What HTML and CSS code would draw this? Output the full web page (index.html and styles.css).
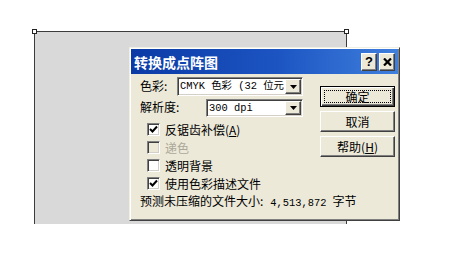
FILE: index.html
```html
<!DOCTYPE html>
<html lang="zh-CN">
<head>
    <meta charset="UTF-8">
    <meta name="viewport" content="width=device-width, initial-scale=1.0">
    <title>转换成点阵图</title>
    <link rel="stylesheet" href="styles.css">
</head>
<body>
    <!-- 背景中的灰色对象 -->
    <div class="sheet">
        <span class="handle left"></span>
        <span class="handle right"></span>
    </div>

    <div class="dialog">
        <div class="title-bar">
            <span class="title">转换成点阵图</span>
            <div class="title-buttons">
                <button class="cap-btn help">?</button>
                <button class="cap-btn">
                    <svg width="9" height="8" viewBox="0 0 9 8"><path d="M1 0.5 L8 7.5 M8 0.5 L1 7.5" stroke="#000" stroke-width="2.2"/></svg>
                </button>
            </div>
        </div>

        <div class="dialog-body">
            <div class="options">
                <div class="field">
                    <span class="label">色彩:</span>
                    <div class="combo wide">
                        <span class="combo-text">CMYK 色彩 (32 位元</span>
                        <span class="combo-arrow"><svg width="7" height="4" viewBox="0 0 7 4"><path d="M0 0 H7 L3.5 4 Z" fill="#000"/></svg></span>
                    </div>
                </div>
                <div class="field second">
                    <span class="label">解析度:</span>
                    <div class="combo narrow">
                        <span class="combo-text">300 dpi</span>
                        <span class="combo-arrow"><svg width="7" height="4" viewBox="0 0 7 4"><path d="M0 0 H7 L3.5 4 Z" fill="#000"/></svg></span>
                    </div>
                </div>

                <div class="check-list">
                    <div class="check-row">
                        <span class="box"><svg width="9" height="9" viewBox="0 0 9 9"><path d="M1 4 L3.5 6.5 L8 1.5" fill="none" stroke="#000" stroke-width="2"/></svg></span>
                        <span>反锯齿补偿(<u>A</u>)</span>
                    </div>
                    <div class="check-row disabled">
                        <span class="box"></span>
                        <span>递色</span>
                    </div>
                    <div class="check-row">
                        <span class="box"></span>
                        <span>透明背景</span>
                    </div>
                    <div class="check-row">
                        <span class="box"><svg width="9" height="9" viewBox="0 0 9 9"><path d="M1 4 L3.5 6.5 L8 1.5" fill="none" stroke="#000" stroke-width="2"/></svg></span>
                        <span>使用色彩描述文件</span>
                    </div>
                </div>

                <div class="size-line">预测未压缩的文件大小:<span class="num">4,513,872</span>字节</div>
            </div>

            <div class="actions">
                <button class="btn default"><span class="focus">确定</span></button>
                <button class="btn">取消</button>
                <button class="btn">帮助(<u>H</u>)</button>
            </div>
        </div>
    </div>
</body>
</html>
```

FILE: styles.css
```css
body {
    margin: 0;
    padding: 31px 0 0 34px;
    width: 463px;
    height: 264px;
    box-sizing: border-box;
    background-color: #fff;
    position: relative;
    overflow: hidden;
    font-family: "Noto Sans CJK SC", sans-serif;
    font-size: 12px;
    color: #000;
}

.sheet {
    width: 311px;
    height: 192px;
    background-color: #d9d9d9;
    border: 1px solid #3c3c3c;
    border-bottom: none;
    position: relative;
}

.handle {
    position: absolute;
    top: -3px;
    width: 3px;
    height: 3px;
    border: 1px solid #222;
    background-color: #fff;
}

.handle.left { left: -3px; }
.handle.right { right: -3px; }

/* 对话框窗口 */
.dialog {
    position: absolute;
    left: 129px;
    top: 47px;
    width: 271px;
    height: 174px;
    box-sizing: border-box;
    padding: 1px;
    background-color: #ece9d8;
    border: 1px solid;
    border-color: #f1efe2 #404040 #404040 #f1efe2;
    box-shadow: inset 1px 1px #fff, inset -1px -1px #808080;
}

.title-bar {
    height: 25px;
    display: flex;
    align-items: center;
    justify-content: space-between;
    padding: 0 3px 0 3px;
    background: linear-gradient(to right, #0b3aa6, #1c55c2 55%, #3f7fdd);
}

.title {
    color: #fff;
    font-weight: bold;
    font-size: 14px;
}

.title-buttons {
    display: flex;
    gap: 2px;
}

.cap-btn {
    width: 16px;
    height: 18px;
    padding: 0;
    box-sizing: border-box;
    display: flex;
    align-items: center;
    justify-content: center;
    background-color: #ece9d8;
    border: 1px solid;
    border-color: #fff #404040 #404040 #fff;
    box-shadow: inset -1px -1px #808080;
    font: bold 13px "Liberation Sans", sans-serif;
    color: #000;
}

.dialog-body {
    display: flex;
    padding: 3px 0 0 9px;
}

.options {
    width: 163px;
    display: flex;
    flex-direction: column;
}

.field {
    height: 19px;
    display: flex;
    align-items: center;
    justify-content: space-between;
}

.field.second {
    height: 18px;
    margin-top: 3px;
}

.label {
    margin-top: -3px;
}

.combo {
    height: 100%;
    box-sizing: border-box;
    display: flex;
    align-items: stretch;
    padding: 1px;
    background-color: #fff;
    border: 1px solid;
    border-color: #808080 #fff #fff #808080;
    box-shadow: inset 1px 1px #404040, inset -1px -1px #d4d0c8;
}

.combo.wide { width: 126px; }
.combo.narrow { width: 97px; }

.combo-text {
    flex: 1;
    overflow: hidden;
    white-space: nowrap;
    padding-left: 1px;
    font: 10.4px/15px "Liberation Mono", "Noto Sans CJK SC", monospace;
}

.combo-arrow {
    width: 16px;
    box-sizing: border-box;
    display: flex;
    align-items: center;
    justify-content: center;
    background-color: #ece9d8;
    border: 1px solid;
    border-color: #fff #404040 #404040 #fff;
    box-shadow: inset -1px -1px #808080;
}

.check-list {
    margin-top: 3px;
}

.check-row {
    height: 18px;
    display: flex;
    align-items: center;
    gap: 5px;
    padding-left: 7px;
}

.box {
    width: 13px;
    height: 13px;
    box-sizing: border-box;
    display: flex;
    align-items: center;
    justify-content: center;
    background-color: #fff;
    border: 1px solid;
    border-color: #808080 #fff #fff #808080;
    box-shadow: inset 1px 1px #404040, inset -1px -1px #d4d0c8;
}

.disabled { color: #aca899; }
.disabled .box { background-color: #ece9d8; }

.size-line {
    height: 17px;
    line-height: 17px;
    white-space: nowrap;
}

.num {
    margin: 0 6px 0 7px;
    font: 10.4px "Liberation Mono", monospace;
}

/* 右侧按钮 */
.actions {
    margin: 9px 0 0 17px;
    display: flex;
    flex-direction: column;
    gap: 4px;
}

.btn {
    width: 75px;
    height: 21px;
    padding: 0;
    box-sizing: border-box;
    display: flex;
    align-items: center;
    justify-content: center;
    background-color: #ece9d8;
    border: 1px solid;
    border-color: #fff #404040 #404040 #fff;
    box-shadow: inset -1px -1px #808080;
    font: 12px "Noto Sans CJK SC", sans-serif;
    color: #000;
}

.btn.default {
    border: 1px solid #000;
    padding: 3px;
    box-shadow: inset 1px 1px #fff, inset -1px -1px #404040, inset -2px -2px #808080;
}

.focus {
    flex: 1;
    align-self: stretch;
    display: flex;
    align-items: center;
    justify-content: center;
    border: 1px dotted #000;
}
```
